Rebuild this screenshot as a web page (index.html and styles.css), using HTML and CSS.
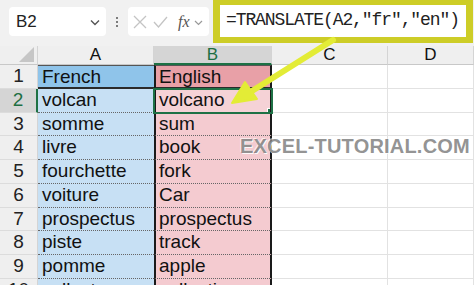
FILE: index.html
```html
<!DOCTYPE html>
<html>
<head>
<meta charset="utf-8">
<link rel="stylesheet" href="styles.css">
</head>
<body>
<div class="page">
  <div class="toolbar">
    <div class="namebox">
      <span class="ref">B2</span>
      <svg class="chev" width="10" height="7" viewBox="0 0 10 7"><path d="M1 1.5 L5 5.5 L9 1.5" fill="none" stroke="#555" stroke-width="1.4"/></svg>
    </div>
    <div class="dots"><i></i><i></i><i></i></div>
    <div class="fxbox">
      <svg class="ic" width="14" height="14" viewBox="0 0 14 14"><path d="M1 1 L13 13 M13 1 L1 13" stroke="#c4c4c4" stroke-width="1.3" fill="none"/></svg>
      <svg class="ic" width="15" height="12" viewBox="0 0 15 12"><path d="M1 6 L5.5 11 L14 1" stroke="#c4c4c4" stroke-width="1.3" fill="none"/></svg>
      <span class="fx">fx</span>
      <svg class="chev2" width="9" height="6" viewBox="0 0 9 6"><path d="M1 1 L4.5 4.5 L8 1" fill="none" stroke="#999" stroke-width="1.2"/></svg>
    </div>
    <div class="formula"><div class="finner">=TRANSLATE(A2,"fr","en")</div></div>
  </div>
  <div class="sheet">
    <div class="corner"><span class="tri"></span></div>
    <div class="ch">A</div>
    <div class="ch sel">B</div>
    <div class="ch">C</div>
    <div class="ch">D</div>

    <div class="rh">1</div><div class="c a h">French</div><div class="c b h">English</div><div class="c e"></div><div class="c e"></div>
    <div class="rh selr">2</div><div class="c a">volcan</div><div class="c b active">volcano</div><div class="c e"></div><div class="c e"></div>
    <div class="rh">3</div><div class="c a">somme</div><div class="c b">sum</div><div class="c e"></div><div class="c e"></div>
    <div class="rh">4</div><div class="c a">livre</div><div class="c b">book</div><div class="c e"></div><div class="c e"></div>
    <div class="rh">5</div><div class="c a">fourchette</div><div class="c b">fork</div><div class="c e"></div><div class="c e"></div>
    <div class="rh">6</div><div class="c a">voiture</div><div class="c b">Car</div><div class="c e"></div><div class="c e"></div>
    <div class="rh">7</div><div class="c a">prospectus</div><div class="c b">prospectus</div><div class="c e"></div><div class="c e"></div>
    <div class="rh">8</div><div class="c a">piste</div><div class="c b">track</div><div class="c e"></div><div class="c e"></div>
    <div class="rh">9</div><div class="c a">pomme</div><div class="c b">apple</div><div class="c e"></div><div class="c e"></div>
    <div class="rh">10</div><div class="c a">collecte</div><div class="c b">collection</div><div class="c e"></div><div class="c e"></div>
  </div>
  <div class="watermark">EXCEL-TUTORIAL.COM</div>
  <svg class="arrow" width="474" height="285" viewBox="0 0 474 285">
    <path d="M333 40 L252 91" stroke="#e3ec36" stroke-width="6" stroke-linecap="round" fill="none"/>
    <path d="M232 103 L257 99 L245 82 Z" fill="#e3ec36" stroke="#e3ec36" stroke-width="2" stroke-linejoin="round"/>
  </svg>
</div>
</body>
</html>
```

FILE: styles.css
```css
* { box-sizing: border-box; }
html, body { margin: 0; padding: 0; background: #fff; }
.page {
  position: relative;
  width: 474px;
  height: 285px;
  overflow: hidden;
  font-family: "Liberation Sans", Arial, sans-serif;
  color: #111;
}
.toolbar {
  display: flex;
  align-items: flex-start;
  height: 46px;
  background: #f1f1f1;
  padding-left: 9px;
}
.namebox {
  margin-top: 7px;
  width: 97px;
  height: 29px;
  background: #fff;
  border-radius: 4px;
  display: flex;
  align-items: center;
  justify-content: space-between;
  padding: 0 6px 0 7px;
}
.ref { font-size: 17px; color: #222; }
.chev { margin-top: 2px; }
.dots {
  width: 22px;
  height: 29px;
  margin-top: 7px;
  display: flex;
  flex-direction: column;
  align-items: center;
  justify-content: center;
  gap: 2px;
}
.dots i { display: block; width: 2px; height: 2px; background: #555; border-radius: 1px; }
.fxbox {
  margin-top: 7px;
  width: 81px;
  height: 29px;
  background: #fff;
  border-radius: 4px;
  display: flex;
  align-items: center;
  padding-left: 5px;
  gap: 6px;
}
.fx {
  font-family: "Liberation Serif", serif;
  font-style: italic;
  font-size: 16px;
  color: #555;
  margin-left: 4px;
  margin-right: -2px;
}
.chev2 { margin-top: 2px; }
.formula {
  margin-left: 4px;
  width: 260px;
  height: 43px;
  background: #cdcd27;
  padding: 5px 7px 6px 7px;
}
.finner {
  height: 32px;
  background: #fff;
  font-family: "Liberation Mono", monospace;
  font-size: 18px;
  letter-spacing: -1.1px;
  line-height: 31px;
  padding-left: 6px;
  color: #222;
  white-space: nowrap;
}
.sheet {
  display: grid;
  grid-template-columns: 38px 116px 118px 116px 86px;
  grid-template-rows: 19px repeat(10, 23.75px);
}
.corner {
  background: #efefef;
  border-right: 1px solid #d4d4d4;
  border-bottom: 1px solid #c8c8c8;
  position: relative;
}
.tri {
  position: absolute;
  right: 3px;
  bottom: 2px;
  width: 0; height: 0;
  border-left: 15px solid transparent;
  border-bottom: 15px solid #c6c6c6;
}
.ch {
  background: #efefef;
  border-right: 1px solid #d4d4d4;
  border-bottom: 1px solid #c8c8c8;
  text-align: center;
  font-size: 17px;
  line-height: 18px;
  color: #111;
}
.ch.sel {
  background: #d5d5d5;
  color: #1e6f43;
  border-bottom: 2px solid #1e7145;
}
.rh {
  background: #efefef;
  border-right: 1px solid #d4d4d4;
  border-bottom: 1px solid #dcdcdc;
  text-align: center;
  font-size: 19px;
  line-height: 21px;
  color: #222;
}
.rh.selr {
  background: #d5d5d5;
  color: #1e6f43;
  border-right: 2px solid #1e7145;
}
.c {
  font-size: 19px;
  line-height: 21px;
  padding-left: 4px;
  white-space: nowrap;
  overflow: hidden;
}
.a {
  background: #c7e0f4;
  border-bottom: 1px dotted #666;
}
.b {
  background: #f4cbd0;
  border-left: 2px solid #1a1a1a;
  border-right: 2px solid #1a1a1a;
  border-bottom: 1px dotted #666;
  padding-left: 3px;
}
.a.h {
  background: #8fc4ea;
  border-bottom: 2px solid #2a2a2a;
  border-top: 1px solid #555;
}
.b.h {
  background: #e8a0a7;
  border-bottom: 2px solid #2a2a2a;
  border-top: 1px solid #555;
}
.b.active {
  position: relative;
  outline: 2px solid #1e7145;
  outline-offset: -1px;
  background: #f5d2d6;
}
.b.active::after {
  content: "";
  position: absolute;
  right: -5px;
  bottom: -4px;
  width: 6px;
  height: 6px;
  background: #1e7145;
  border: 1px solid #fff;
}
.e {
  background: #fff;
  border-right: 1px solid #e2e2e2;
  border-bottom: 1px solid #e2e2e2;
}
.watermark {
  position: absolute;
  left: 240px;
  top: 135px;
  font-size: 20px;
  font-weight: bold;
  color: rgba(100, 100, 100, 0.7);
  text-shadow: 1px 1px 0 rgba(255,255,255,0.9), -1px -1px 0 rgba(255,255,255,0.6);
  letter-spacing: 0.2px;
  white-space: nowrap;
}
.arrow {
  position: absolute;
  left: 0;
  top: 0;
  pointer-events: none;
}
```
